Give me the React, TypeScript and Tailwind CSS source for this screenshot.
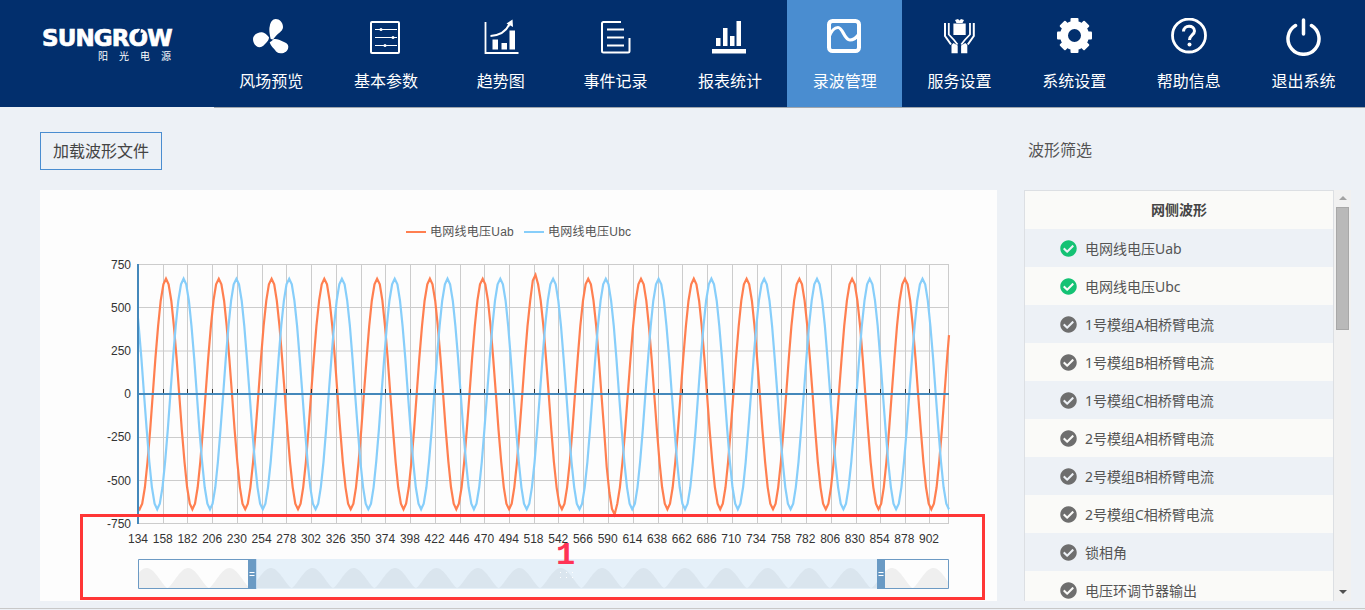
import type { ReactNode } from "react";
import { FaCheckCircle } from "react-icons/fa";

const PERIOD = 52.78;
const ORANGE_PEAK = 166;
const BLUE_PEAK = 183.6;
const ZERO = 394;
const BOTTOM = 523.5;
const UNIT = (BOTTOM - ZERO) / 750;

const ticks = Array.from({ length: 33 }, (_, i) => 134 + i * 24);
const gridX = [163.5, 187.5, 212.5, 237.5, 262.5, 286.5, 311.5, 336.5, 361.5, 385.5, 410.5, 435.5, 460.5, 484.5, 509.5, 534.5, 558.5, 583.5, 608.5, 633.5, 658.5, 682.5, 707.5, 732.5, 757.5, 781.5, 806.5, 831.5, 856.5, 880.5, 905.5, 929.5, 948.5];

function wave(peak: number, bump?: (x: number) => number) {
  const step = PERIOD / 20;
  const val = (x: number) => 668 * Math.cos(((x - peak) / PERIOD) * Math.PI * 2) + (bump ? bump(x) : 0);
  const xs = [138];
  let x = peak - Math.floor((peak - 138) / step) * step;
  for (; x < 949; x += step) xs.push(x);
  xs.push(949);
  return xs.map((p) => `${p.toFixed(1)},${(ZERO - val(p) * UNIT).toFixed(1)}`).join(" ");
}

// the two small glitches the recording has around 518 and 590
const orangeBump = (x: number) => {
  if (x > 531 && x < 537) return 22;
  if (x > 606 && x < 616) return -30;
  return 0;
};

function shadowPath() {
  let d = "M138,588";
  for (let x = 138; x <= 948; x += 1) {
    const c = Math.abs(Math.cos(((x - 146.7) / 41.4) * Math.PI));
    d += ` L${x},${(588 - 20 * c ** 1.4).toFixed(1)}`;
  }
  return d + " L948,588 Z";
}

function ChartSvg() {
  return (
    <svg viewBox="40 190 957 411" className="block h-[411px] w-[957px] font-['Liberation_Sans','Noto_Sans_CJK_SC',sans-serif]">
      {/* legend */}
      <line x1="406" y1="232" x2="426" y2="232" stroke="#ff7f50" strokeWidth="2" />
      <text x="430" y="236" fontSize="12" fill="#555" letterSpacing="0.25">电网线电压Uab</text>
      <line x1="524" y1="232" x2="544" y2="232" stroke="#87cefa" strokeWidth="2" />
      <text x="548" y="236" fontSize="12" fill="#555" letterSpacing="0.25">电网线电压Ubc</text>

      {/* grid */}
      {[264.5, 307.5, 351, 437.5, 480.5, 523.5].map((y) => (
        <line key={y} x1="138" y1={y} x2="949" y2={y} stroke="#ccc" />
      ))}
      {gridX.map((x) => (
        <line key={x} x1={x} y1="264" x2={x} y2="524" stroke="#ccc" />
      ))}

      <polyline points={wave(ORANGE_PEAK, orangeBump)} fill="none" stroke="#ff7f50" strokeWidth="2.2" />
      <polyline points={wave(BLUE_PEAK)} fill="none" stroke="#87cefa" strokeWidth="2.2" />

      {/* axes */}
      {gridX.slice(0, 32).map((x) => (
        <line key={x} x1={x} y1="389" x2={x} y2="393" stroke="#333" />
      ))}
      <line x1="138" y1={ZERO} x2="949" y2={ZERO} stroke="#4488bb" strokeWidth="2" />
      <line x1="138" y1="264" x2="138" y2="524" stroke="#4488bb" strokeWidth="2" />

      {[
        [750, 269],
        [500, 312],
        [250, 355],
        [0, 398],
        [-250, 441],
        [-500, 485],
        [-750, 528],
      ].map(([v, y]) => (
        <text key={v} x="131" y={y} textAnchor="end" fontSize="12" fill="#333">{v}</text>
      ))}
      {ticks.map((t, i) => (
        <text key={t} x={138 + i * 24.72} y="543" textAnchor="middle" fontSize="12" fill="#333">{t}</text>
      ))}

      {/* data zoom */}
      <path d={shadowPath()} fill="#efefef" />
      <rect x="256" y="559" width="621" height="30" fill="#90c5ed" fillOpacity="0.22" />
      <path d="M248,559.5 H138.5 V588.5 H248 M878,559.5 H948.5 V588.5 H878" fill="none" stroke="#6c9ac4" />
      <rect x="248" y="559" width="8" height="30" fill="#6a9ac4" />
      <rect x="877" y="559" width="8" height="30" fill="#6a9ac4" />
      <rect x="256" y="559" width="1" height="30" fill="#c7dcf0" />
      <path d="M249.500,572.500 h5 M249.500,575.500 h5 M878.500,572.500 h5 M878.500,575.500 h5" stroke="#fff" />
      {[560, 566, 572].map((x) => (
        <g key={x} fill="#fff">
          <rect x={x} y="572" width="1" height="1" />
          <rect x={x} y="577" width="1" height="1" />
        </g>
      ))}
    </svg>
  );
}

function Fan() {
  return (
    <path
      fill="currentColor"
      d="M18.700 21 C17.500 16 16.800 11 17.800 8 C18.500 4 20.500 1 23.700 1 C27.500 1 31 4.500 31 9 C31 12.500 27.500 14.500 25.300 16.500 C23.500 18 22.500 20 21 21.500 Z M17 19.300 C14.500 16.500 12.500 14.500 10 14.300 C6.500 14 1 16.500 1 21 C1 25 3.500 29.300 7.700 29.300 C10.500 29.300 12.500 26.500 14 25 C15.500 23.500 17 22 17 19.300 Z M17.700 24.300 C19.500 23.500 20.500 22 22 21 C25 20.500 28 22 30.300 23.300 C33.500 24.500 36.500 26 36.300 29 C36 33 33 35.300 28.700 35.300 C25.500 35.300 24 33.500 23 32 C21.500 30 19 28.500 17.700 24.300 Z"
    />
  );
}

function Sliders() {
  return (
    <g stroke="currentColor" fill="none">
      <rect x="4" y="4" width="28" height="31" rx="1" strokeWidth="2" />
      <path d="M8 11.500 H30 M8 19.500 H30 M8 27.500 H30" strokeWidth="1" />
      <circle cx="14" cy="11.500" r="1.500" fill="currentColor" strokeWidth="0" />
      <circle cx="26" cy="19.500" r="1.500" fill="currentColor" strokeWidth="0" />
      <circle cx="18" cy="27.500" r="1.500" fill="currentColor" strokeWidth="0" />
    </g>
  );
}

function Trend() {
  return (
    <g>
      <path d="M3.500 4 V35 H36.500" fill="none" stroke="currentColor" strokeWidth="1.800" />
      <path d="M10.500 21.500 h5.500 v10 h-5.500 Z M19.500 25 h5.500 v6.500 h-5.500 Z M27.500 12.500 h5.500 v19 h-5.500 Z" fill="currentColor" />
      <path d="M8.500 18 C17 17.500 24 14 27.500 6" fill="none" stroke="currentColor" strokeWidth="2" />
      <path d="M24.500 5.500 L30.500 1.500 L31 9 Z" fill="currentColor" />
    </g>
  );
}

function Doc() {
  return (
    <g fill="none" stroke="currentColor" strokeWidth="2">
      <path d="M25 4 H7.500 Q6 4 6 5.500 V33 Q6 34.500 7.500 34.500 H32 Q33.500 34.500 33.500 33 V20" />
      <path d="M11 11.500 H28 M11 19.500 H28 M11 27.500 H28" />
    </g>
  );
}

function Bars() {
  return (
    <path
      fill="currentColor"
      d="M1 31 H35 V35.500 H1 Z M5 20 H9.500 V28 H5 Z M12 10 H16.500 V28 H12 Z M19 18 H23.500 V28 H19 Z M25.500 3 H30 V28 H25.500 Z"
    />
  );
}

function WaveIcon() {
  return (
    <g fill="none" stroke="currentColor">
      <rect x="3" y="3" width="30" height="30" rx="3.500" strokeWidth="4" />
      <path d="M3 19 C6 11 9 9.500 12 9.500 C17 9.500 18 22 24 22 C28 22 31 19 33 16" strokeWidth="3.200" />
    </g>
  );
}

function Hand() {
  return (
    <g>
      <path d="M5 5 V18 L11 26.500" fill="none" stroke="currentColor" strokeWidth="2" />
      <path d="M8.800 5 V16.500 L14 22 L17.500 26.500" fill="none" stroke="currentColor" strokeWidth="1.800" />
      <path d="M11.500 27 L13.500 25 L17.700 27.500 V35.300 H11.500 Z" fill="currentColor" />
    </g>
  );
}

function Hands() {
  return (
    <g fill="currentColor">
      <path d="M13.400 5.500 H25.700 V17 H13.400 Z" />
      <path d="M16.500 5 L15 2 L18 1 L19.500 2.500 L21 1 L24 2 L22.500 5 Z" />
      <Hand />
      <g transform="translate(38.800 0) scale(-1 1)">
        <Hand />
      </g>
    </g>
  );
}

function Gear() {
  return (
    <g fill="currentColor" transform="translate(19.500 17.500)">
      <circle r="10.500" fill="none" stroke="currentColor" strokeWidth="8" />
      {[0, 45, 90, 135, 180, 225, 270, 315].map((a) => (
        <rect key={a} x="-4" y="-17.500" width="8" height="7" rx="1" transform={`rotate(${a})`} />
      ))}
    </g>
  );
}

function Help() {
  return (
    <g fill="none" stroke="currentColor">
      <circle cx="19" cy="17.500" r="16.500" strokeWidth="2.800" />
      <path d="M13.500 13.500 C13.500 6.500 24.500 6.500 24.500 13 C24.500 17 19.500 17 19.500 22" strokeWidth="3" />
      <circle cx="19.500" cy="26.500" r="2" fill="currentColor" stroke="none" />
    </g>
  );
}

function Power() {
  return (
    <g fill="none" stroke="currentColor">
      <path d="M10.500 7.500 A15.500 15.500 0 1 0 26.500 7.500" strokeWidth="3.500" strokeLinecap="round" />
      <path d="M18.500 2 V16" strokeWidth="3.500" strokeLinecap="round" />
    </g>
  );
}

const navItems: { label: string; icon: ReactNode; active?: boolean }[] = [
  { label: "风场预览", icon: <Fan /> },
  { label: "基本参数", icon: <Sliders /> },
  { label: "趋势图", icon: <Trend /> },
  { label: "事件记录", icon: <Doc /> },
  { label: "报表统计", icon: <Bars /> },
  { label: "录波管理", icon: <WaveIcon />, active: true },
  { label: "服务设置", icon: <Hands /> },
  { label: "系统设置", icon: <Gear /> },
  { label: "帮助信息", icon: <Help /> },
  { label: "退出系统", icon: <Power /> },
];

const rows: { label: string; on?: boolean }[] = [
  { label: "电网线电压Uab", on: true },
  { label: "电网线电压Ubc", on: true },
  { label: "1号模组A相桥臂电流" },
  { label: "1号模组B相桥臂电流" },
  { label: "1号模组C相桥臂电流" },
  { label: "2号模组A相桥臂电流" },
  { label: "2号模组B相桥臂电流" },
  { label: "2号模组C相桥臂电流" },
  { label: "锁相角" },
  { label: "电压环调节器输出" },
];

function Logo() {
  return (
    <div className="flex w-[214px] shrink-0 flex-col items-start pl-[42px] pt-[28px] text-white">
      <div className="font-['DejaVu_Sans',sans-serif] text-[23px] font-bold leading-[20px] tracking-[-0.9px] [-webkit-text-stroke:0.7px_white]">
        SUNGR
        <span className="relative">
          O
          <svg viewBox="0 0 10 12" className="absolute left-[6px] top-[3px] h-[12px] w-[10px]">
            <path d="M6 0 L1.500 6.500 H4.500 L3 12 L8.500 4.800 H5.500 Z" fill="#022f6d" />
          </svg>
        </span>
        W
      </div>
      <div className="ml-[56px] mt-[2px] text-[10px] leading-[12px] tracking-[11px]">阳光电源</div>
    </div>
  );
}

export default function App() {
  return (
    <div className="flex h-[610px] w-[1365px] flex-col overflow-hidden bg-[#edf1f6] font-['Noto_Sans','Noto_Sans_CJK_SC',sans-serif]">
      <header className="flex h-[108px] shrink-0 bg-[#edf1f6]">
        <div className="h-[107px] bg-[#022f6d]">
          <Logo />
        </div>
        <nav className="flex h-[108px] flex-1 border-b border-[#a0a6ad] bg-[#022f6d]">
          {navItems.map((item) => (
            <div
              key={item.label}
              className={`flex h-[107px] w-[114.7px] flex-col items-center pt-[18px] text-white ${item.active ? "bg-[#4a8dd0]" : ""}`}
            >
              <svg viewBox="0 0 38 38" className="h-[38px] w-[38px]">
                {item.icon}
              </svg>
              <span className="mt-[13px] text-[16px] leading-[24px]">{item.label}</span>
            </div>
          ))}
        </nav>
      </header>

      <main className="flex h-[500px] shrink-0 pb-[7px] pl-[40px] pt-[24px]">
        <div className="flex w-[957px] shrink-0 flex-col gap-[20px]">
          <div>
            <button className="h-[38px] w-[122px] border border-[#4a8dd0] text-[16px] leading-[24px] text-[#444]">
              加载波形文件
            </button>
          </div>
          <div className="relative h-[411px] bg-[#fdfdfd]">
            <ChartSvg />
            <div className="absolute left-[40px] top-[324px] h-[86px] w-[905px] border-[3px] border-[#ff3636]" />
            <span className="absolute left-[516px] top-[357px] font-['Liberation_Mono',monospace] text-[32px] font-bold leading-[18px] text-[#ff3355]">1</span>
          </div>
        </div>

        <div className="ml-[27px] flex w-[327px] shrink-0 flex-col gap-[20px]">
          <div className="h-[38px] pl-[4px] text-[16px] leading-[36px] text-[#555]">波形筛选</div>
          <div className="flex h-[411px] overflow-hidden">
            <div className="w-[310px] shrink-0 border-x border-t border-[#dcdfe3] text-[14px] text-[#555]">
              <div className="flex h-[38px] items-center justify-center bg-[#fafaf8] pb-[2px] font-bold text-[#444]">网侧波形</div>
              {rows.map((row, i) => (
                <div
                  key={row.label}
                  className={`flex h-[38px] items-center gap-[8px] pl-[35px] ${i % 2 === 0 ? "bg-[#edf1f6]" : "bg-[#fafaf8]"}`}
                >
                  <FaCheckCircle size={17} className={row.on ? "text-[#14c274]" : "text-[#6e6e6e]"} />
                  <span>{row.label}</span>
                </div>
              ))}
            </div>
            <div className="flex w-[17px] shrink-0 flex-col items-center bg-[#f1f1f1] pt-[6px]">
              <div className="h-0 w-0 border-x-[4px] border-b-[4px] border-x-transparent border-b-[#a3a3a3]" />
              <div className="mt-[7px] h-[123px] w-[13px] border border-[#a8a8a8] bg-[#b9b9b9]" />
              <div className="mb-[7px] mt-auto h-0 w-0 border-x-[4px] border-t-[4px] border-x-transparent border-t-[#505050]" />
            </div>
          </div>
        </div>
      </main>
      <div className="h-px shrink-0 bg-[#c8c8c8]" />
    </div>
  );
}
